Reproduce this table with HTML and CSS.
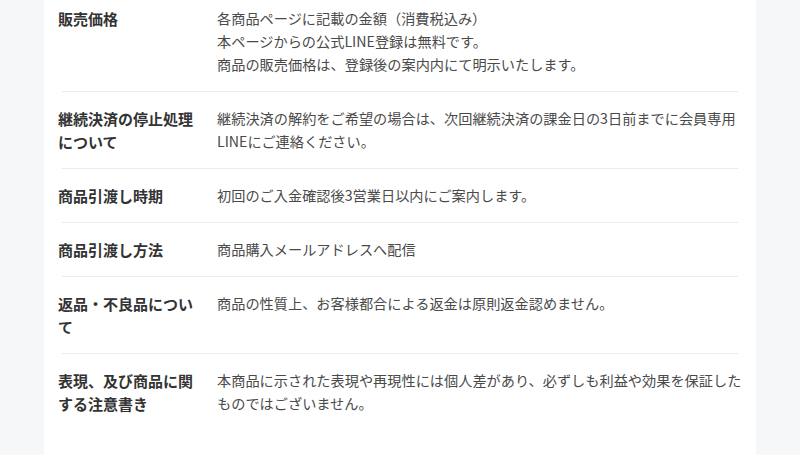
FILE: index.html
```html
<!DOCTYPE html>
<html lang="ja">
<head>
    <meta charset="UTF-8">
    <meta name="viewport" content="width=device-width, initial-scale=1.0">
    <title>特定商取引法に基づく表記</title>
    <link rel="stylesheet" href="styles.css">
</head>
<body>
    <section class="info">
        <div class="card">
            <div class="spec-row">
                <div class="spec-label">販売価格</div>
                <div class="spec-value">各商品ページに記載の金額（消費税込み）<br>本ページからの公式LINE登録は無料です。<br>商品の販売価格は、登録後の案内内にて明示いたします。</div>
            </div>
            <div class="spec-row">
                <div class="spec-label">継続決済の停止処理について</div>
                <div class="spec-value">継続決済の解約をご希望の場合は、次回継続決済の課金日の3日前までに会員専用LINEにご連絡ください。</div>
            </div>
            <div class="spec-row">
                <div class="spec-label">商品引渡し時期</div>
                <div class="spec-value">初回のご入金確認後3営業日以内にご案内します。</div>
            </div>
            <div class="spec-row">
                <div class="spec-label">商品引渡し方法</div>
                <div class="spec-value">商品購入メールアドレスへ配信</div>
            </div>
            <div class="spec-row">
                <div class="spec-label">返品・不良品について</div>
                <div class="spec-value">商品の性質上、お客様都合による返金は原則返金認めません。</div>
            </div>
            <div class="spec-row">
                <div class="spec-label">表現、及び商品に関する注意書き</div>
                <div class="spec-value">本商品に示された表現や再現性には個人差があり、必ずしも利益や効果を保証したものではございません。</div>
            </div>
        </div>
    </section>
</body>
</html>
```

FILE: styles.css
```css
body {
    margin: 0;
    background-color: #fff;
    font-family: "Noto Sans CJK JP", "Noto Sans", sans-serif;
    color: #444;
}
.info {
    background-color: #f6f7f9;
    padding: 0 44px;
}
.card {
    background-color: #fff;
    padding: 0 18px 25px;
}
.spec-row {
    display: grid;
    grid-template-columns: 155px minmax(0, 1fr);
    padding: 15px 0;
    border-bottom: 1px solid #ebebeb;
    line-height: 23px;
}
.spec-row:first-child {
    padding-top: 7px;
}
.spec-row:last-child {
    border-bottom: none;
}
.spec-label {
    margin-left: -4px;
    padding-right: 10px;
    font-size: 15px;
    font-weight: bold;
    color: #333;
}
.spec-value {
    margin-right: -10px;
    font-size: 14.2px;
    color: #4a4a4a;
}
```
